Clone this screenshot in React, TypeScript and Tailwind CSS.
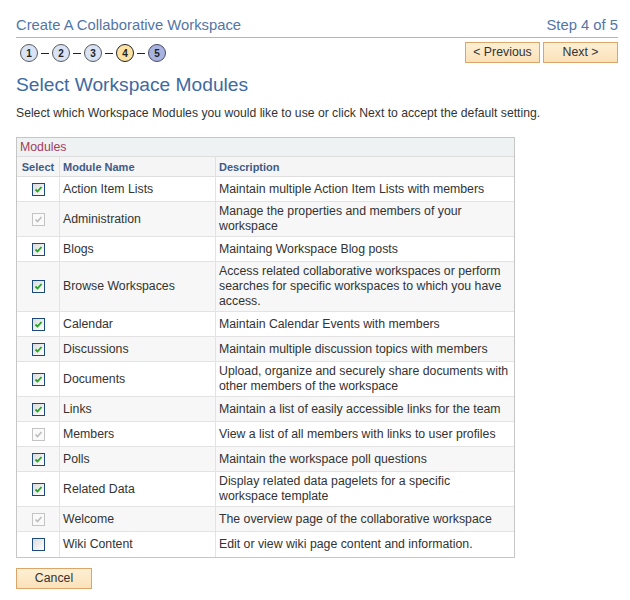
const modules = [
  { name: "Action Item Lists", desc: ["Maintain multiple Action Item Lists with members"], state: "on" },
  { name: "Administration", desc: ["Manage the properties and members of your", "workspace"], state: "locked" },
  { name: "Blogs", desc: ["Maintaing Workspace Blog posts"], state: "on" },
  {
    name: "Browse Workspaces",
    desc: ["Access related collaborative workspaces or perform", "searches for specific workspaces to which you have", "access."],
    state: "on",
  },
  { name: "Calendar", desc: ["Maintain Calendar Events with members"], state: "on" },
  { name: "Discussions", desc: ["Maintain multiple discussion topics with members"], state: "on" },
  { name: "Documents", desc: ["Upload, organize and securely share documents with", "other members of the workspace"], state: "on" },
  { name: "Links", desc: ["Maintain a list of easily accessible links for the team"], state: "on" },
  { name: "Members", desc: ["View a list of all members with links to user profiles"], state: "locked" },
  { name: "Polls", desc: ["Maintain the workspace poll questions"], state: "on" },
  { name: "Related Data", desc: ["Display related data pagelets for a specific", "workspace template"], state: "on" },
  { name: "Welcome", desc: ["The overview page of the collaborative workspace"], state: "locked" },
  { name: "Wiki Content", desc: ["Edit or view wiki page content and information."], state: "off" },
];

const steps = [
  { n: 1, cls: "bg-[#d9e3f6] border-[#5a5a5a]" },
  { n: 2, cls: "bg-[#d9e3f6] border-[#5a5a5a]" },
  { n: 3, cls: "bg-[#d9e3f6] border-[#5a5a5a]" },
  { n: 4, cls: "bg-[#fde3a3] border-[#222]" },
  { n: 5, cls: "bg-[#a9b3df] border-[#4a4a6a]" },
];

function CheckBox({ state }: { state: string }) {
  if (state === "locked") {
    return (
      <div className="w-[13px] h-[13px] border border-[#c4c4c4] bg-[#fafafa] flex items-center justify-center">
        <svg width="9" height="9" viewBox="0 0 9 9">
          <path d="M1.5 4.5 L3.5 6.5 L7.5 2" fill="none" stroke="#bdbdbd" strokeWidth="1.6" />
        </svg>
      </div>
    );
  }
  return (
    <div className="w-[13px] h-[13px] border border-[#1d4a78] bg-gradient-to-br from-[#dcdcdc] to-white flex items-center justify-center">
      {state === "on" && (
        <svg width="9" height="9" viewBox="0 0 9 9">
          <path d="M1.5 4.5 L3.5 6.5 L7.5 2" fill="none" stroke="#22a322" strokeWidth="1.8" />
        </svg>
      )}
    </div>
  );
}

function OrangeButton({ label, w }: { label: string; w: string }) {
  return (
    <button
      className={`${w} h-[21px] border border-[#dca66a] bg-gradient-to-b from-[#fdf0d4] to-[#fbe1b8] text-[12.3px] text-[#333] leading-none`}
    >
      {label}
    </button>
  );
}

export default function App() {
  return (
    <div className="w-[630px] h-[600px] bg-white px-4 pt-[16px] font-['Liberation_Sans',Arial,sans-serif] text-[#333]">
      {/* Title bar */}
      <div className="flex items-end justify-between border-b border-[#b5b5b5] pb-[3px] w-[602px]">
        <span className="text-[14.8px] text-[#5375a6] leading-[18px]">Create A Collaborative Workspace</span>
        <span className="text-[14.8px] text-[#5375a6] leading-[18px]">Step 4 of 5</span>
      </div>

      {/* Steps + nav */}
      <div className="flex items-center justify-between w-[602px] mt-[4px]">
        <div className="flex items-center pl-[4px] pt-[1px]">
          {steps.map((s, i) => (
            <div key={s.n} className="flex items-center">
              {i > 0 && <div className="w-[8px] h-px bg-[#222] mx-[3px]" />}
              <div
                className={`w-[18px] h-[18px] rounded-full border ${s.cls} flex items-center justify-center text-[10px] font-bold text-[#222]`}
              >
                {s.n}
              </div>
            </div>
          ))}
        </div>
        <div className="flex gap-[3px]">
          <OrangeButton label="< Previous" w="w-[75px]" />
          <OrangeButton label="Next >" w="w-[75px]" />
        </div>
      </div>

      <h1 className="text-[19.2px] text-[#3f6aa1] leading-[24px] mt-[10px]">Select Workspace Modules</h1>
      <p className="text-[12.2px] leading-[15px] mt-[9px] whitespace-nowrap">
        Select which Workspace Modules you would like to use or click Next to accept the default setting.
      </p>

      {/* Modules grid */}
      <div className="w-[499px] mt-[16px] border border-[#c6c6c6] text-[12.3px]">
        <div className="h-[19px] bg-[#eff2f2] border-b border-[#dedede] px-[3px] text-[12.3px] leading-[19px] text-[#a2405c]">
          Modules
        </div>
        <div className="grid grid-cols-[43px_156px_1fr] bg-[#f5f5f5] border-b border-[#dedede] h-[20px] text-[11px] font-bold text-[#3e5b87] leading-[20px]">
          <div className="border-r border-[#e0e0e0] text-center">Select</div>
          <div className="border-r border-[#e0e0e0] px-[3px]">Module Name</div>
          <div className="px-[3px]">Description</div>
        </div>
        {modules.map((m, i) => (
          <div
            key={m.name}
            className={`grid grid-cols-[43px_156px_1fr] min-h-[25px] ${i < modules.length - 1 ? "border-b" : ""} border-[#e3e3e3] ${
              i % 2 === 1 ? "bg-[#f7f7f7]" : "bg-white"
            }`}
          >
            <div className="border-r border-[#e3e3e3] flex items-center justify-center">
              <CheckBox state={m.state} />
            </div>
            <div className="border-r border-[#e3e3e3] px-[3px] flex items-center whitespace-nowrap">{m.name}</div>
            <div className="px-[3px] py-[2px] leading-[15px] flex flex-col justify-center">
              {m.desc.map((d) => (
                <span key={d} className="whitespace-nowrap">
                  {d}
                </span>
              ))}
            </div>
          </div>
        ))}
      </div>

      <div className="flex mt-[10px]">
        <OrangeButton label="Cancel" w="w-[76px]" />
      </div>
    </div>
  );
}
